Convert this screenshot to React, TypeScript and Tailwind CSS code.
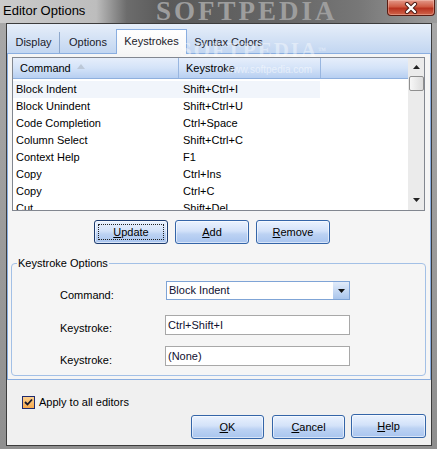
import React from 'react';

const rows: [string, string][] = [
  ['Block Indent', 'Shift+Ctrl+I'],
  ['Block Unindent', 'Shift+Ctrl+U'],
  ['Code Completion', 'Ctrl+Space'],
  ['Column Select', 'Shift+Ctrl+C'],
  ['Context Help', 'F1'],
  ['Copy', 'Ctrl+Ins'],
  ['Copy', 'Ctrl+C'],
  ['Cut', 'Shift+Del'],
];

function Btn({
  label,
  focused = false,
  className = 'w-[74px]',
}: {
  label: string;
  focused?: boolean;
  className?: string;
}) {
  return (
    <div
      className={`relative flex h-[24px] ${className} items-center justify-center rounded-[3px] border ${
        focused ? 'border-[#1c3b6e]' : 'border-[#3465a8]'
      } bg-[linear-gradient(to_bottom,#eaf2fe_0%,#d3e2f9_45%,#bcd2f3_60%,#a9c5ef_100%)] shadow-[inset_0_0_0_1px_rgba(255,255,255,0.55)]`}
    >
      {focused && <div className="absolute inset-[3px] border border-dotted border-[#222]" />}
      <span className="leading-[14px]">
        <span className="underline">{label[0]}</span>
        {label.slice(1)}
      </span>
    </div>
  );
}

export default function App() {
  return (
    <div className="relative flex h-[449px] w-[437px] flex-col overflow-hidden bg-[linear-gradient(to_bottom,#a9a9a9,#8f8f8f)] font-['Liberation_Sans',Arial,sans-serif] text-[11px] text-black">
      {/* title bar */}
      <div className="relative flex h-[23px] items-start overflow-hidden bg-[linear-gradient(90deg,#cbcbcb_0%,#bdbdbd_22%,#6c6c6c_29%,#595959_38%,#666_65%,#777_82%,#9c9c9c_100%)]">
        <span className="pointer-events-none absolute left-[156px] top-[-9px] font-['Liberation_Serif',serif] text-[27px] font-bold tracking-[3px] text-[#9d9d9d]">
          SOFTPEDIA
        </span>
        <span className="relative ml-[3px] mt-[3px] text-[13px] leading-[16px]">Editor Options</span>
        <div className="relative ml-auto mr-[2px] flex h-[16px] w-[48px] items-center justify-center rounded-b-[4px] border border-t-0 border-[#5a1c12] bg-[linear-gradient(to_bottom,#e3998a_0%,#cf5a43_45%,#b8321f_55%,#d0654c_100%)] shadow-[inset_0_0_0_1px_rgba(255,220,210,0.35)]">
          <svg width="14" height="12" viewBox="0 0 14 12">
            <path d="M3 2 L11 10 M11 2 L3 10" stroke="#4a1a14" strokeWidth="4.2" strokeLinecap="round" />
            <path d="M3 2 L11 10 M11 2 L3 10" stroke="#fff" strokeWidth="2.4" strokeLinecap="round" />
          </svg>
        </div>
      </div>

      {/* frame */}
      <div className="flex flex-1 pb-[3px] pl-[6px] pr-[5px]">
        <div className="flex flex-1 flex-col border border-[#3c3c3c] bg-[#f0f0f0]">
          {/* tab strip */}
          <div className="flex h-[30px] items-end border-b border-[#8aaee0] bg-[linear-gradient(to_bottom,#e6eef9,#c2d6f1)] pl-[1px] text-[#1a1a2a]">
            <div className="flex h-[21px] w-[52px] items-center justify-center border-r border-[#8ea8cc]">Display</div>
            <div className="flex h-[21px] w-[56px] items-center justify-center">Options</div>
            <div className="mb-[-1px] flex h-[25px] w-[71px] items-start justify-center border border-b-0 border-[#8aaee0] bg-[linear-gradient(to_bottom,#ffffff,#f6f6f6)] pt-[4px] leading-[14px]">
              Keystrokes
            </div>
            <div className="flex h-[21px] w-[83px] items-center justify-center">Syntax Colors</div>
          </div>

          {/* tab panel */}
          <div className="flex h-[326px] flex-col border border-t-0 border-[#8aaee0] bg-[#f5f5f5]">
            {/* list view */}
            <div className="ml-[4px] mt-[3px] flex h-[154px] w-[413px] border border-[#828790] bg-white">
              <div className="flex flex-1 flex-col overflow-hidden">
                <div className="flex h-[21px] shrink-0 border-b border-[#8fb0de] bg-[linear-gradient(to_bottom,#e6eefb_0%,#d4e3f8_50%,#b7cff1_100%)]">
                  <div className="flex w-[166px] items-center border-r border-[#98b6e0] pl-[7px]">
                    Command
                    <svg className="ml-[6px] mt-[-4px]" width="8" height="5" viewBox="0 0 8 5">
                      <path d="M0 5 L4 0 L8 5 Z" fill="#bcc8d8" />
                    </svg>
                  </div>
                  <div className="flex w-[142px] items-center border-r border-[#98b6e0] pl-[7px]">Keystroke</div>
                  <div className="flex-1" />
                </div>
                <div className="flex flex-col pt-[2px]">
                  {rows.map(([cmd, key], i) => (
                    <div key={i} className="flex h-[17px] shrink-0 items-center">
                      <div className={`flex h-full w-[307px] items-center ${i === 0 ? 'bg-[#f1f5fb]' : ''}`}>
                        <span className="w-[166px] pl-[3px]">{cmd}</span>
                        <span className="pl-[4px]">{key}</span>
                      </div>
                    </div>
                  ))}
                </div>
              </div>
              {/* scrollbar */}
              <div className="flex w-[16px] flex-col items-center bg-[#ebebeb]">
                <svg className="mt-[7px]" width="7" height="4" viewBox="0 0 7 4">
                  <path d="M0 4 L3.5 0 L7 4 Z" fill="#222" />
                </svg>
                <div className="mt-[7px] h-[15px] w-[15px] rounded-[2px] border border-[#8f8f8f] bg-[linear-gradient(to_right,#f7f7f7,#dcdcdc)]" />
                <div className="flex-1" />
                <svg className="mb-[8px]" width="7" height="4" viewBox="0 0 7 4">
                  <path d="M0 0 L3.5 4 L7 0 Z" fill="#222" />
                </svg>
              </div>
            </div>

            {/* list buttons */}
            <div className="ml-[86px] mt-[9px] flex gap-[7px]">
              <Btn label="Update" focused />
              <Btn label="Add" />
              <Btn label="Remove" />
            </div>

            {/* group box */}
            <div className="relative ml-[3px] mt-[19px] flex h-[113px] w-[415px] flex-col rounded-[4px] border border-[#a3c0e6]">
              <span className="absolute left-[5px] top-[-8px] bg-[#f5f5f5] px-[1px] leading-[14px]">Keystroke Options</span>
              <div className="mt-[17px] flex pl-[48px]">
                <span className="mt-[7px] w-[106px] leading-[14px]">Command:</span>
                <div className="flex h-[19px] w-[184px] items-center border border-[#7fa4d6] bg-white pl-[2px]">
                  <span className="flex-1 text-[#101030]">Block Indent</span>
                  <div className="flex h-[17px] w-[16px] items-center justify-center bg-[linear-gradient(to_bottom,#e2ecfa,#a9c5ec)]">
                    <svg width="7" height="4" viewBox="0 0 7 4">
                      <path d="M0 0 L3.5 4 L7 0 Z" fill="#111" />
                    </svg>
                  </div>
                </div>
              </div>
              <div className="mt-[13px] flex pl-[48px]">
                <span className="mt-[6px] w-[105px] leading-[14px]">Keystroke:</span>
                <div className="flex h-[20px] w-[185px] items-center border border-[#a8a8a8] bg-white pl-[2px] text-[#101030]">
                  Ctrl+Shift+I
                </div>
              </div>
              <div className="mt-[11px] flex pl-[48px]">
                <span className="mt-[7px] w-[105px] leading-[14px]">Keystroke:</span>
                <div className="flex h-[20px] w-[185px] items-center border border-[#a8a8a8] bg-white pl-[2px] text-[#101030]">
                  (None)
                </div>
              </div>
            </div>
          </div>

          {/* apply checkbox */}
          <div className="ml-[15px] mt-[15px] flex items-center">
            <div className="flex h-[13px] w-[13px] items-center justify-center border border-[#1e2a6e] bg-[linear-gradient(to_bottom,#fcd08e,#f6a84c)]">
              <svg width="9" height="8" viewBox="0 0 9 8">
                <path d="M1 4 L3.5 6.5 L8 1.5" stroke="#15152a" strokeWidth="1.8" fill="none" />
              </svg>
            </div>
            <span className="ml-[4px] leading-[14px]">Apply to all editors</span>
          </div>

          {/* dialog buttons */}
          <div className="mr-[5px] mt-[6px] flex justify-end">
            <Btn label="OK" className="w-[73px]" />
            <div className="ml-[8px]">
              <Btn label="Cancel" className="w-[73px]" />
            </div>
            <div className="ml-[6px] mt-[-1px]">
              <Btn label="Help" className="w-[75px]" />
            </div>
          </div>
        </div>
      </div>

      {/* watermarks */}
      <span className="pointer-events-none absolute left-[180px] top-[35px] font-['Liberation_Serif',serif] text-[21px] font-bold tracking-[2px] text-white opacity-40">
        SOFTPEDIA<sup className="text-[8px]">™</sup>
      </span>
      <span className="pointer-events-none absolute left-[226px] top-[62px] text-[10px] text-white opacity-50">www.softpedia.com</span>
    </div>
  );
}
